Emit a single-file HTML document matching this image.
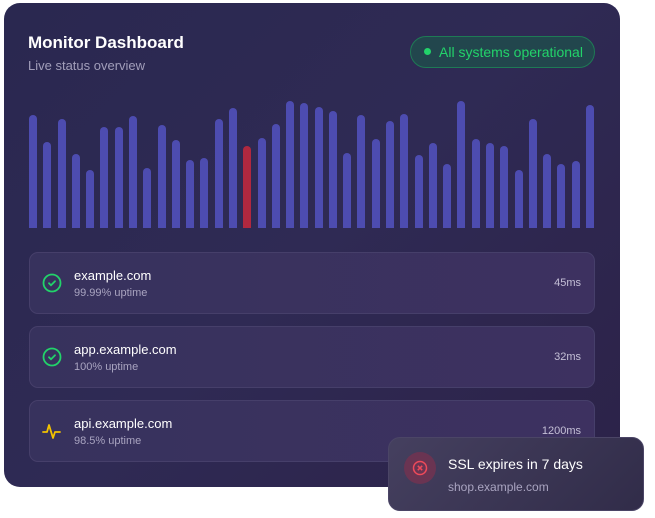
<!DOCTYPE html>
<html><head><style>
*{margin:0;padding:0;box-sizing:border-box}
body{width:655px;height:518px;background:#fff;position:relative;overflow:hidden;font-family:"Liberation Sans",sans-serif}
.card{position:absolute;left:4px;top:3px;width:616px;height:484px;border-radius:16px;background:linear-gradient(135deg,#2a2850 0%,#2f2a54 50%,#2c2248 100%)}
.t{position:absolute;color:#fff}
.bar{position:absolute;width:8px;border-radius:4px 4px 0 0;background:#4d4cb0;bottom:290px}
.row{position:absolute;left:29px;width:566px;height:62px;border-radius:9px;background:linear-gradient(90deg,#37325d,#3d3160);border:1px solid #463f6a}
.nm{position:absolute;left:44px;top:15px;font-size:13px;color:#fff}
.up{position:absolute;left:44px;top:34px;font-size:11px;color:#a9a4c0}
.ms{position:absolute;right:13px;top:24px;font-size:11px;color:#c4bfd6}
.ic{position:absolute;left:12px;top:20px}
</style></head><body>
<div class="card"></div>
<div class="t" style="left:28px;top:33px;font-size:17px;font-weight:bold">Monitor Dashboard</div>
<div class="t" style="left:28px;top:58px;font-size:13px;color:#a29eba">Live status overview</div>
<div style="position:absolute;left:410px;top:36px;width:185px;height:32px;border-radius:16px;background:#22464d;border:1px solid #1e7a55"></div>
<div style="position:absolute;left:424px;top:48px;width:7px;height:7px;border-radius:50%;background:#22d36a"></div>
<div class="t" style="left:439px;top:44px;font-size:14px;color:#22d36a">All systems operational</div>
<div id="bars"></div>
<div class="row" style="top:252px"><svg class="ic" width="20" height="20" viewBox="0 0 20 20"><circle cx="10" cy="10" r="8.5" fill="none" stroke="#22d36a" stroke-width="1.8"/><path d="M7 10.2l2 2 4-4" fill="none" stroke="#22d36a" stroke-width="1.8" stroke-linecap="round"/></svg><div class="nm">example.com</div><div class="up">99.99% uptime</div><div class="ms">45ms</div></div>
<div class="row" style="top:326px"><svg class="ic" width="20" height="20" viewBox="0 0 20 20"><circle cx="10" cy="10" r="8.5" fill="none" stroke="#22d36a" stroke-width="1.8"/><path d="M7 10.2l2 2 4-4" fill="none" stroke="#22d36a" stroke-width="1.8" stroke-linecap="round"/></svg><div class="nm">app.example.com</div><div class="up">100% uptime</div><div class="ms">32ms</div></div>
<div class="row" style="top:400px"><svg class="ic" width="20" height="20" viewBox="0 0 20 20"><path d="M1 11h4l2-7 4 13 2-6h5" fill="none" stroke="#f2c200" stroke-width="1.8" stroke-linejoin="round" stroke-linecap="round"/></svg><div class="nm">api.example.com</div><div class="up">98.5% uptime</div><div class="ms">1200ms</div></div>
<div style="position:absolute;left:388px;top:437px;width:256px;height:74px;border-radius:12px;background:linear-gradient(135deg,#45405f,#312c49);border:1px solid #4b4566"></div>
<div style="position:absolute;left:404px;top:452px;width:32px;height:32px;border-radius:50%;background:#6a3452"></div>
<svg style="position:absolute;left:412px;top:460px" width="16" height="16" viewBox="0 0 16 16"><circle cx="8" cy="8" r="6.5" fill="none" stroke="#f04a5a" stroke-width="1.5"/><path d="M5.8 5.8l4.4 4.4M10.2 5.8l-4.4 4.4" stroke="#f04a5a" stroke-width="1.5"/></svg>
<div class="t" style="left:448px;top:456px;font-size:14px">SSL expires in 7 days</div>
<div class="t" style="left:448px;top:480px;font-size:12px;color:#a9a4c0">shop.example.com</div>
<script>
var tops=[115,142,119,154,170,127,127,116,168,125,140,160,158,119,108,146,138,124,101,103,107,111,153,115,139,121,114,155,143,164,101,139,143,146,170,119,154,164,161,105];
var h='';for(var i=0;i<40;i++){var x=29+i*14.28;h+='<div class="bar" style="left:'+x.toFixed(1)+'px;top:'+tops[i]+'px;height:'+(228-tops[i])+'px;bottom:auto;'+(i==15?'background:#b0283f':'')+'"></div>';}
document.getElementById('bars').innerHTML=h;
</script>
</body></html>
